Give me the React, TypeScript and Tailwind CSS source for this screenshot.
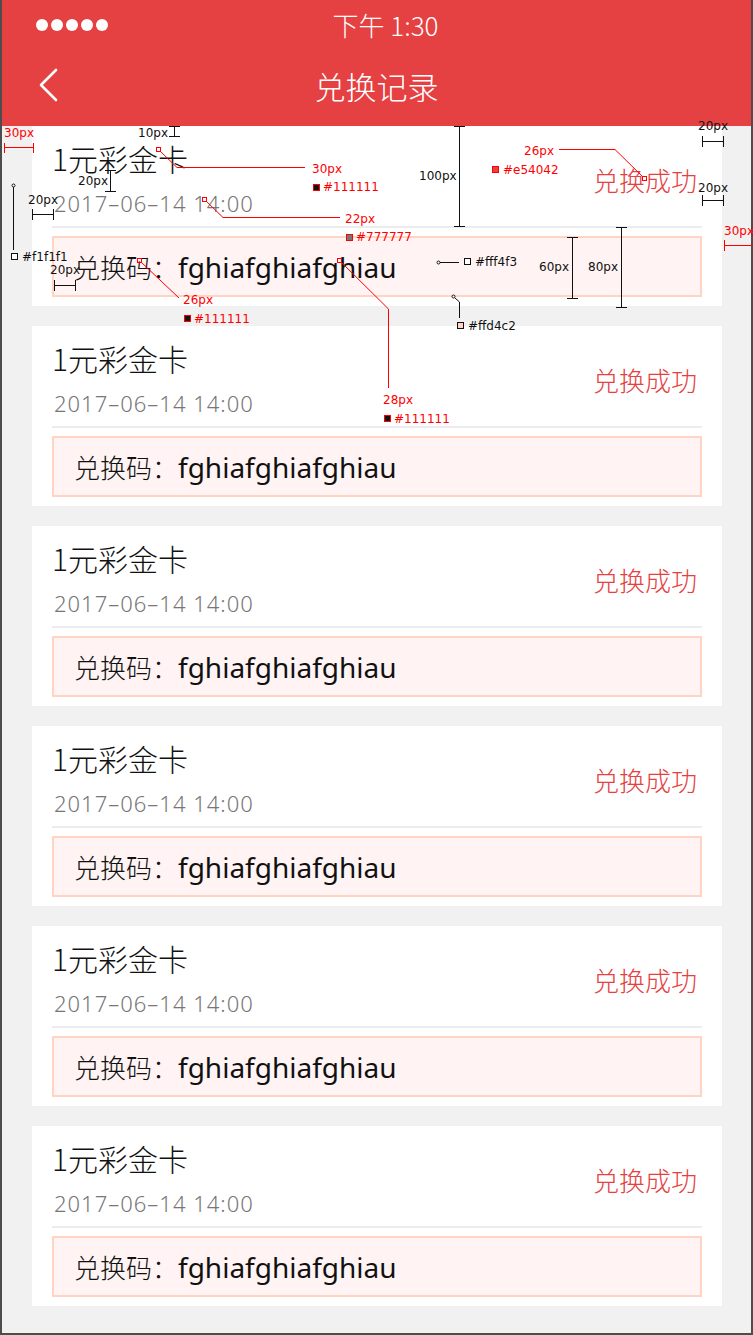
import React from "react";

const records = Array.from({ length: 6 }, (_, i) => ({
  id: i,
  name: "1元彩金卡",
  time: "2017–06–14 14:00",
  status: "兑换成功",
  code: "fghiafghiafghiau",
}));

const cjk = "font-['Noto_Sans_CJK_SC',sans-serif]";

const StatusBar = () => (
  <div className="grid h-[50px] grid-cols-[1fr_auto_1fr] items-center">
    <div className="flex gap-[3px] pl-[34px]">
      {[0, 1, 2, 3, 4].map((d) => (
        <span key={d} className="h-[12px] w-[12px] rounded-full bg-white" />
      ))}
    </div>
    <span className={`ml-[18px] text-[26px] font-light leading-none text-white ${cjk}`}>下午 1:30</span>
    <div />
  </div>
);

const NavBar = () => (
  <div className="relative flex h-[70px] items-center justify-center">
    <button className="absolute left-[34px] top-[18px]">
      <svg width="24" height="34" viewBox="0 0 24 34" fill="none">
        <polyline points="20,2 5,17 20,32" stroke="white" strokeWidth="2.6" strokeLinecap="round" strokeLinejoin="round" />
      </svg>
    </button>
    <h1 className={`text-[31px] font-light leading-none text-white ${cjk}`}>兑换记录</h1>
  </div>
);

const RecordCard = ({ r }: { r: (typeof records)[number] }) => (
  <div className="h-[180px] bg-white">
    <div className="mx-5 flex h-[102px] items-center justify-between border-b-2 border-[#ececee]">
      <div className="flex flex-col self-start pt-[17px]">
        <span className={`text-[30px] font-light leading-[30px] text-[#111111] ${cjk}`}>{r.name}</span>
        <span className="mt-[19px] pl-[2px] font-['Noto_Sans',sans-serif] text-[22px] font-light leading-[22px] tracking-[1px] text-[#777777]">
          {r.time}
        </span>
      </div>
      <span className={`pr-[5px] pt-[8px] text-[26px] font-light leading-none text-[#e54042] ${cjk}`}>{r.status}</span>
    </div>
    <div className="mx-5 mt-[8px] flex h-[61px] items-center border-2 border-[#ffd4c2] bg-[#fff4f3] px-5">
      <span className={`text-[26px] font-light leading-none text-[#111111] ${cjk}`}>兑换码：</span>
      <span className="font-['Noto_Sans','Noto_Sans_CJK_SC',sans-serif] text-[28px] leading-none text-[#111111]">
        {r.code}
      </span>
    </div>
  </div>
);

const red = "#ff0000";
const ink = "#111111";

const Label = ({ x, y, c, t }: { x: number; y: number; c: string; t: string }) => (
  <text x={x} y={y} fill={c} fontSize="12" fontFamily="DejaVu Sans, sans-serif">
    {t}
  </text>
);

const Swatch = ({ x, y, fill, stroke }: { x: number; y: number; fill: string; stroke: string }) => (
  <rect x={x + 0.5} y={y + 0.5} width="6" height="6" fill={fill} stroke={stroke} strokeWidth="1" />
);

const Marker = ({ x, y }: { x: number; y: number }) => (
  <rect x={x + 0.5} y={y + 0.5} width="4" height="4" fill="none" stroke={red} strokeWidth="1" />
);

const HDim = ({ x1, x2, y, c }: { x1: number; x2: number; y: number; c: string }) => (
  <g stroke={c} strokeWidth="1">
    <line x1={x1} y1={y + 0.5} x2={x2} y2={y + 0.5} />
    <line x1={x1 + 0.5} y1={y - 5} x2={x1 + 0.5} y2={y + 6} />
    <line x1={x2 - 0.5} y1={y - 5} x2={x2 - 0.5} y2={y + 6} />
  </g>
);

const VDim = ({ y1, y2, x }: { y1: number; y2: number; x: number }) => (
  <g stroke={ink} strokeWidth="1">
    <line x1={x + 0.5} y1={y1} x2={x + 0.5} y2={y2} />
    <line x1={x - 5} y1={y1 + 0.5} x2={x + 6} y2={y1 + 0.5} />
    <line x1={x - 5} y1={y2 - 0.5} x2={x + 6} y2={y2 - 0.5} />
  </g>
);

// redline overlay from the design hand-off
const Annotations = () => (
  <svg className="pointer-events-none absolute left-0 top-0" width="753" height="1335">
    {/* left margin */}
    <Label x={2} y={137} c={red} t="30px" />
    <g stroke={red} strokeWidth="1">
      <line x1="2" y1="147.5" x2="32" y2="147.5" />
      <line x1="2.5" y1="143" x2="2.5" y2="153" />
      <line x1="31.5" y1="143" x2="31.5" y2="153" />
    </g>

    <Label x={136} y={137} c={ink} t="10px" />
    <VDim x={172} y1={126} y2={137} />
    <Label x={76} y={185} c={ink} t="20px" />
    <VDim x={108} y1={170} y2={192} />

    {/* title font */}
    <Marker x={154} y={147} />
    <polyline points="158,151 175,167.5 303,167.5" fill="none" stroke={red} strokeWidth="1" />
    <Label x={310} y={173} c={red} t="30px" />
    <Swatch x={311} y={184} fill="#111111" stroke={red} />
    <Label x={321} y={191} c={red} t="#111111" />

    {/* date font */}
    <Marker x={200} y={197} />
    <polyline points="204,201 221,217.5 338,217.5" fill="none" stroke={red} strokeWidth="1" />
    <Label x={343} y={223} c={red} t="22px" />
    <Swatch x={344} y={234} fill="#777777" stroke={red} />
    <Label x={354} y={241} c={red} t="#777777" />

    {/* page bg */}
    <line x1="11.5" y1="187" x2="11.5" y2="250" stroke={ink} strokeWidth="1" />
    <circle cx="11.5" cy="185.5" r="1.5" fill="white" stroke={ink} strokeWidth="1" />
    <Swatch x={9} y={253} fill="#ffffff" stroke={ink} />
    <Label x={20} y={261} c={ink} t="#f1f1f1" />

    <Label x={26} y={204} c={ink} t="20px" />
    <HDim x1={30} x2={52} y={214} c={ink} />
    <Label x={48} y={274} c={ink} t="20px" />
    <HDim x1={52} x2={74} y={285} c={ink} />

    {/* label font */}
    <Marker x={135} y={258} />
    <line x1="139" y1="262" x2="177" y2="298" stroke={red} strokeWidth="1" />
    <Label x={181} y={304} c={red} t="26px" />
    <Swatch x={182} y={315} fill="#111111" stroke={red} />
    <Label x={192} y={323} c={red} t="#111111" />

    {/* code font */}
    <Marker x={335} y={258} />
    <polyline points="339,262 386.5,309 386.5,388" fill="none" stroke={red} strokeWidth="1" />
    <Label x={381} y={404} c={red} t="28px" />
    <Swatch x={382} y={415} fill="#111111" stroke={red} />
    <Label x={392} y={423} c={red} t="#111111" />

    {/* box colours */}
    <line x1="438" y1="262.5" x2="457" y2="262.5" stroke={ink} strokeWidth="1" />
    <circle cx="436.5" cy="262.5" r="1.5" fill="white" stroke={ink} strokeWidth="1" />
    <Swatch x={462} y={258} fill="#ffffff" stroke={ink} />
    <Label x={473} y={266} c={ink} t="#fff4f3" />
    <circle cx="451.5" cy="296.5" r="1.5" fill="white" stroke={ink} strokeWidth="1" />
    <polyline points="453,298 457.5,302 457.5,318" fill="none" stroke={ink} strokeWidth="1" />
    <Swatch x={455} y={322} fill="#ffd4c2" stroke={ink} />
    <Label x={466} y={330} c={ink} t="#ffd4c2" />

    {/* heights */}
    <VDim x={457} y1={126} y2={227} />
    <Label x={417} y={180} c={ink} t="100px" />
    <VDim x={570} y1={237} y2={299} />
    <Label x={537} y={271} c={ink} t="60px" />
    <VDim x={619} y1={227} y2={308} />
    <Label x={586} y={271} c={ink} t="80px" />

    {/* status font */}
    <Label x={522} y={155} c={red} t="26px" />
    <polyline points="557,149.5 613,149.5 641,177" fill="none" stroke={red} strokeWidth="1" />
    <Marker x={640} y={176} />
    <Swatch x={490} y={166} fill="#e54042" stroke={red} />
    <Label x={501} y={174} c={red} t="#e54042" />

    {/* right paddings */}
    <Label x={696} y={130} c={ink} t="20px" />
    <HDim x1={700} x2={722} y={141} c={ink} />
    <Label x={696} y={192} c={ink} t="20px" />
    <HDim x1={700} x2={722} y={200} c={ink} />
    <Label x={722} y={235} c={red} t="30px" />
    <g stroke={red} strokeWidth="1">
      <line x1="722" y1="245.5" x2="753" y2="245.5" />
      <line x1="722.5" y1="240" x2="722.5" y2="251" />
    </g>
  </svg>
);

export default function App() {
  return (
    <div className="relative flex h-[1335px] w-[753px] flex-col border-x-2 border-b-2 border-[#4d4d4d] bg-[#f1f1f1]">
      <header className="h-[126px] bg-[#e54042]">
        <StatusBar />
        <NavBar />
      </header>
      <main className="flex flex-col gap-5 pl-[30px] pr-[29px]">
        {records.map((r) => (
          <RecordCard key={r.id} r={r} />
        ))}
      </main>
      <Annotations />
    </div>
  );
}
